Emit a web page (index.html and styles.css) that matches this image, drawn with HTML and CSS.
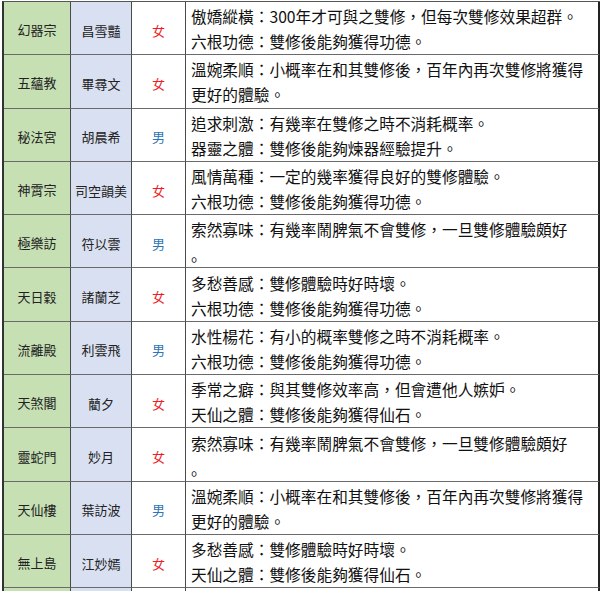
FILE: index.html
```html
<!DOCTYPE html>
<html lang="zh-Hant">
<head>
<meta charset="utf-8">
<title>雙修對象</title>
<link rel="stylesheet" href="styles.css">
</head>
<body>
<div class="sheet">
  <div class="row">
    <div class="cell sect">幻器宗</div><div class="cell name">昌雪豔</div><div class="cell sex f">女</div>
    <div class="cell desc"><div class="ln">傲嬌縱橫：300年才可與之雙修，但每次雙修效果超群。</div><div class="ln">六根功德：雙修後能夠獲得功德。</div></div>
  </div>
  <div class="row">
    <div class="cell sect">五蘊教</div><div class="cell name">畢尋文</div><div class="cell sex f">女</div>
    <div class="cell desc"><div class="ln">溫婉柔順：小概率在和其雙修後，百年內再次雙修將獲得</div><div class="ln">更好的體驗。</div></div>
  </div>
  <div class="row">
    <div class="cell sect">秘法宮</div><div class="cell name">胡晨希</div><div class="cell sex m">男</div>
    <div class="cell desc"><div class="ln">追求刺激：有幾率在雙修之時不消耗概率。</div><div class="ln">器靈之體：雙修後能夠煉器經驗提升。</div></div>
  </div>
  <div class="row">
    <div class="cell sect">神霄宗</div><div class="cell name">司空韻美</div><div class="cell sex f">女</div>
    <div class="cell desc"><div class="ln">風情萬種：一定的幾率獲得良好的雙修體驗。</div><div class="ln">六根功德：雙修後能夠獲得功德。</div></div>
  </div>
  <div class="row">
    <div class="cell sect">極樂訪</div><div class="cell name">符以雲</div><div class="cell sex m">男</div>
    <div class="cell desc"><div class="ln">索然寡味：有幾率鬧脾氣不會雙修，一旦雙修體驗頗好</div><div class="ln">。</div></div>
  </div>
  <div class="row">
    <div class="cell sect">天日穀</div><div class="cell name">諸蘭芝</div><div class="cell sex f">女</div>
    <div class="cell desc"><div class="ln">多愁善感：雙修體驗時好時壞。</div><div class="ln">六根功德：雙修後能夠獲得功德。</div></div>
  </div>
  <div class="row">
    <div class="cell sect">流離殿</div><div class="cell name">利雲飛</div><div class="cell sex m">男</div>
    <div class="cell desc"><div class="ln">水性楊花：有小的概率雙修之時不消耗概率。</div><div class="ln">六根功德：雙修後能夠獲得功德。</div></div>
  </div>
  <div class="row">
    <div class="cell sect">天煞閣</div><div class="cell name">藺夕</div><div class="cell sex f">女</div>
    <div class="cell desc"><div class="ln">季常之癖：與其雙修效率高，但會遭他人嫉妒。</div><div class="ln">天仙之體：雙修後能夠獲得仙石。</div></div>
  </div>
  <div class="row">
    <div class="cell sect">靈蛇門</div><div class="cell name">妙月</div><div class="cell sex f">女</div>
    <div class="cell desc"><div class="ln">索然寡味：有幾率鬧脾氣不會雙修，一旦雙修體驗頗好</div><div class="ln">。</div></div>
  </div>
  <div class="row">
    <div class="cell sect">天仙樓</div><div class="cell name">葉訪波</div><div class="cell sex m">男</div>
    <div class="cell desc"><div class="ln">溫婉柔順：小概率在和其雙修後，百年內再次雙修將獲得</div><div class="ln">更好的體驗。</div></div>
  </div>
  <div class="row">
    <div class="cell sect">無上島</div><div class="cell name">江妙嫣</div><div class="cell sex f">女</div>
    <div class="cell desc"><div class="ln">多愁善感：雙修體驗時好時壞。</div><div class="ln">天仙之體：雙修後能夠獲得仙石。</div></div>
  </div>
  <div class="row stub">
    <div class="cell sect"></div><div class="cell name"></div><div class="cell sex"></div>
    <div class="cell desc"></div>
  </div>
</div>
</body>
</html>
```
FILE: styles.css
```css
html, body {
  margin: 0;
  padding: 0;
  background: #ffffff;
  overflow: hidden;
}

body {
  width: 602px;
  height: 591px;
  font-family: "Noto Sans CJK SC", "Noto Sans CJK TC", "Noto Sans", sans-serif;
  color: #111;
}

.sheet {
  margin: 1px 0 0 2px;
  width: 598px;
  box-sizing: border-box;
  border-top: 1px solid #555;
  border-left: 2px solid #333;
}

.row {
  display: grid;
  grid-template-columns: 67px 61px 54px 414px;
  height: 53.3px;
}

.row.stub {
  height: 3px;
}

.row.stub .cell {
  border-bottom: none;
  padding: 0;
}

.cell {
  box-sizing: border-box;
  border-right: 1px solid #4a4a4a;
  border-bottom: 1px solid #6a6a6a;
  display: flex;
  align-items: center;
  padding-top: 3px;
  overflow: hidden;
}

.sect,
.name,
.sex {
  justify-content: center;
  font-size: 13px;
  color: #222;
  white-space: nowrap;
}

.sect {
  background: #c6e0b4;
}

.name {
  background: #d9e0f1;
  padding-top: 4px;
}

.sex {
  background: #ffffff;
  padding-top: 4px;
}

.sex.f {
  color: #ee1c25;
}

.sex.m {
  color: #2e75b6;
}

.desc {
  flex-direction: column;
  align-items: flex-start;
  justify-content: center;
  padding-left: 5px;
  padding-top: 2px;
  font-size: 15.7px;
  line-height: 25px;
  color: #111;
  border-right: 2px solid #222;
}

.ln {
  white-space: nowrap;
}
```
